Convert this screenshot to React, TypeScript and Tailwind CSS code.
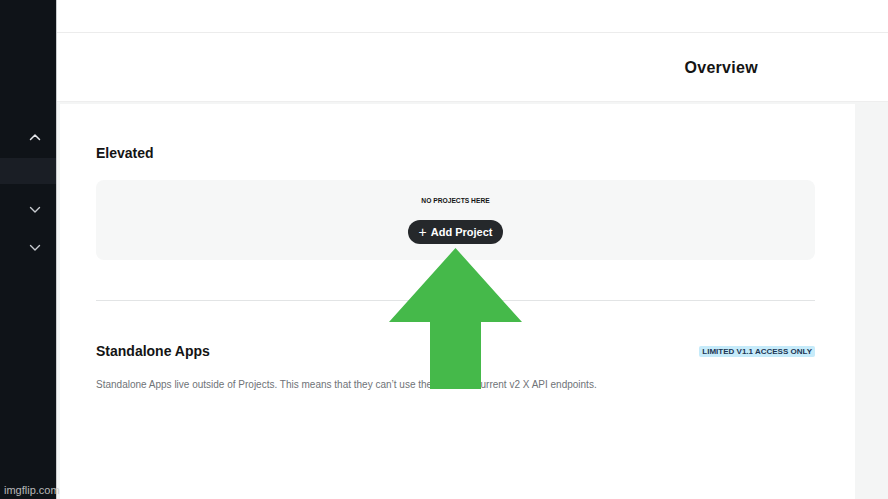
import React from "react";

function ChevronUp() {
  return (
    <svg width="12" height="8" viewBox="0 0 12 8" fill="none">
      <path d="M1.5 6.5 L6 2 L10.5 6.5" stroke="#e5e7eb" strokeWidth="1.5" strokeLinecap="round" strokeLinejoin="round" />
    </svg>
  );
}
function ChevronDown() {
  return (
    <svg width="12" height="8" viewBox="0 0 12 8" fill="none">
      <path d="M1.5 1.5 L6 6 L10.5 1.5" stroke="#c9ccd1" strokeWidth="1.4" strokeLinecap="round" strokeLinejoin="round" />
    </svg>
  );
}

export default function App() {
  return (
    <div
      className="relative flex h-[499px] w-[888px] overflow-hidden bg-white"
      style={{ fontFamily: "'Liberation Sans', Arial, sans-serif" }}
    >
      {/* Sidebar */}
      <div className="flex w-[56px] shrink-0 flex-col bg-[#0f1318]">
        <div className="h-[128px]" />
        <div className="flex h-[18px] items-center justify-end pr-[15px]">
          <ChevronUp />
        </div>
        <div className="h-[12px]" />
        <div className="h-[26px] bg-[#1a1e25]" />
        <div className="h-[20px]" />
        <div className="flex h-[12px] items-center justify-end pr-[15px]">
          <ChevronDown />
        </div>
        <div className="h-[26px]" />
        <div className="flex h-[12px] items-center justify-end pr-[15px]">
          <ChevronDown />
        </div>
      </div>
      <div className="w-[1px] shrink-0 bg-[#c9cbcd]" />

      {/* Main */}
      <div className="flex min-w-0 flex-1 flex-col">
        <div className="h-[33px] shrink-0 border-b border-[#ececec] bg-white" />
        <div className="flex h-[68px] shrink-0 items-center justify-end pr-[130px] pt-[2px]">
          <span className="text-[16px] font-bold tracking-[0.3px] text-[#141414]">Overview</span>
        </div>
        <div className="flex flex-1 border-t border-[#eeeeee] bg-[#f4f5f5]">
          <div className="ml-[3px] mt-[2px] flex flex-1 flex-col bg-white pl-[36px] pr-[40px] pt-[38px]">
            <div className="text-[14px] font-bold leading-[22px] text-[#141414]">Elevated</div>
            <div className="mt-[16px] flex h-[80px] flex-col items-center rounded-[8px] bg-[#f6f7f7] pt-[16px]">
              <div className="text-[6.7px] font-bold leading-[10px] text-[#141414]">NO PROJECTS HERE</div>
              <div className="mt-[14px] flex h-[24px] items-center gap-[4px] rounded-full bg-[#25282b] px-[11px] text-[11px] font-bold text-white">
                <span className="text-[14px] font-normal leading-none">+</span>
                <span>Add Project</span>
              </div>
            </div>
            <div className="mt-[40px] h-[1px] bg-[#e2e4e5]" />
            <div className="mt-[39px] flex items-center justify-between">
              <div className="text-[14px] font-bold leading-[22px] text-[#141414]">Standalone Apps</div>
              <div className="rounded-[2px] bg-[#c6ebfa] px-[3px] text-[8px] font-bold leading-[11px] text-[#1c3553]">
                LIMITED V1.1 ACCESS ONLY
              </div>
            </div>
            <div className="mt-[16px] text-[10px] leading-[14px] text-[#6f7377]">
              Standalone Apps live outside of Projects. This means that they can’t use the new and current v2 X API endpoints.
            </div>
          </div>
          <div className="w-[33px] shrink-0" />
        </div>
      </div>

      {/* Green arrow overlay */}
      <svg className="absolute left-0 top-0" width="888" height="499" viewBox="0 0 888 499">
        <polygon points="455.5,248 522,322 481,322 481,389 430,389 430,322 389,322" fill="#45b94a" />
      </svg>

      {/* Watermark */}
      <div className="absolute bottom-[2px] left-[4px] text-[11px] leading-[14px] text-[#c9c9c9] opacity-90">
        imgflip.com
      </div>
    </div>
  );
}
